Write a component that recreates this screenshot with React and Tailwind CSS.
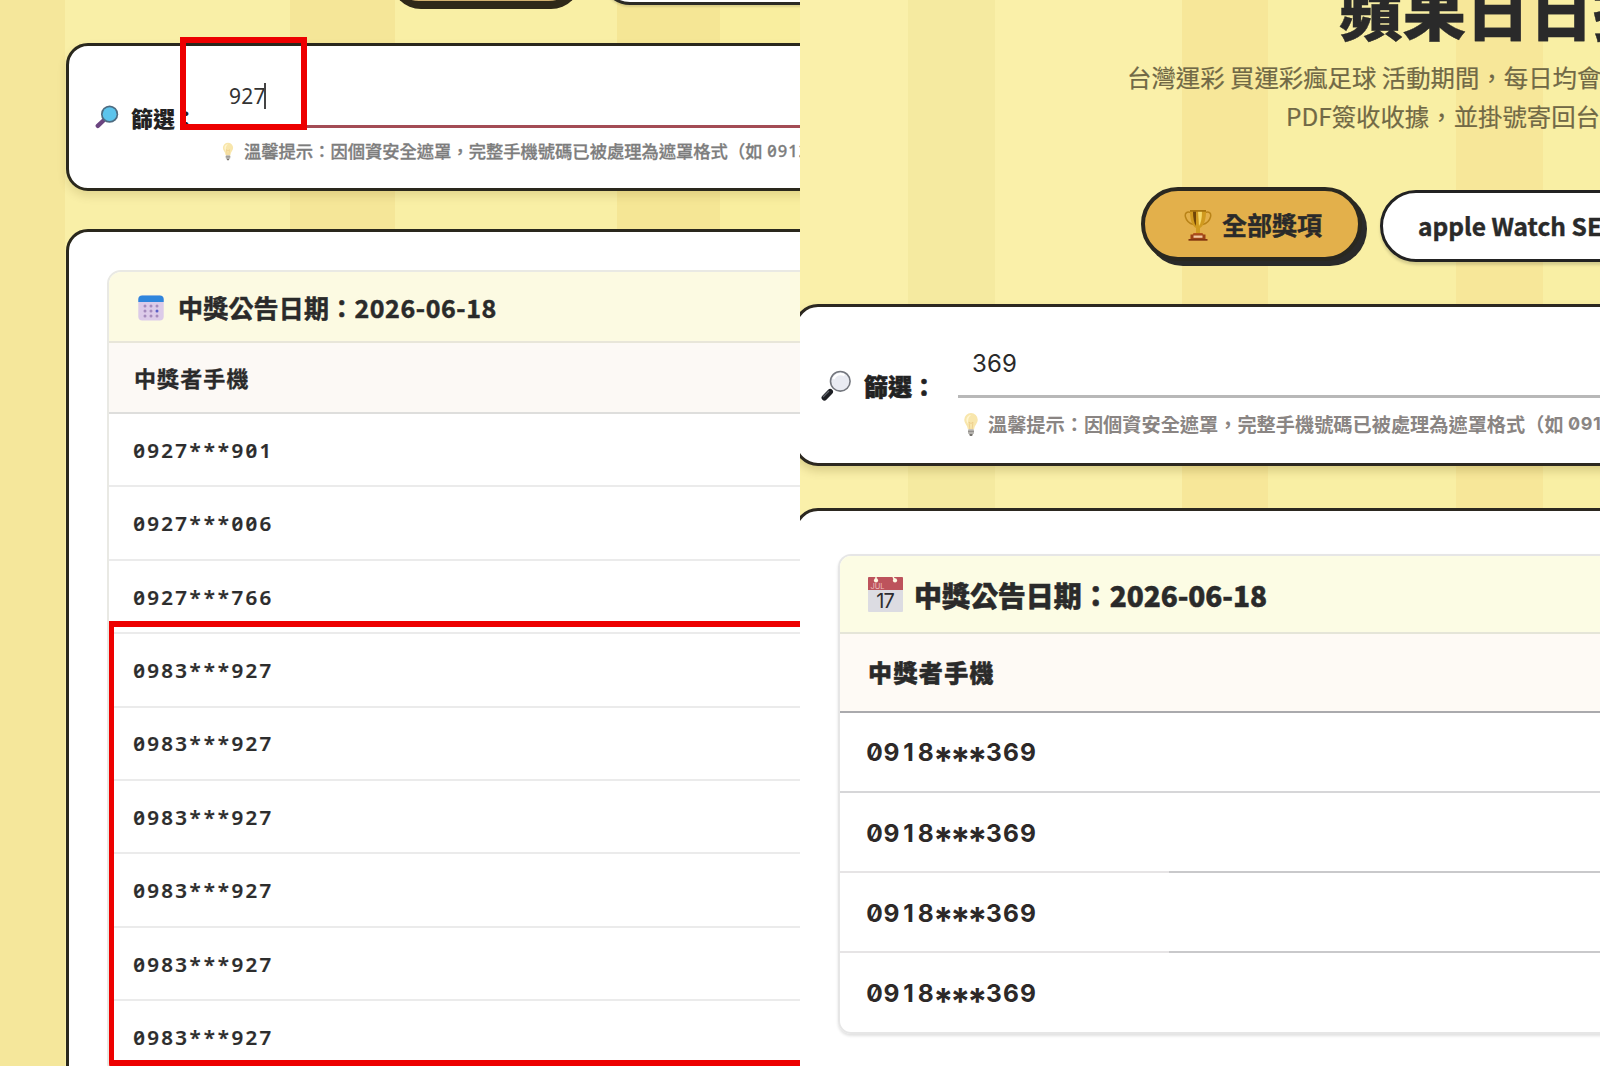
import React from 'react';

const leftPhones = [
  '0927***901',
  '0927***006',
  '0927***766',
  '0983***927',
  '0983***927',
  '0983***927',
  '0983***927',
  '0983***927',
  '0983***927',
];

const rightPhones = ['0918***369', '0918***369', '0918***369', '0918***369'];

const BlueSearchIcon = () => (
  <svg viewBox="0 0 24 24" className="w-6 h-6 shrink-0">
    <path d="M8.5 15.5 2.8 20.8" stroke="#6b4580" strokeWidth="4.4" strokeLinecap="round" />
    <circle cx="14.6" cy="9.2" r="8.6" fill="#4e6b80" />
    <circle cx="14.6" cy="9.2" r="6.9" fill="#5cc4ec" />
  </svg>
);

const GlassSearchIcon = () => (
  <svg viewBox="0 0 32 32" className="w-8 h-8 shrink-0">
    <path d="m12 20-3 3" stroke="#8b8f96" strokeWidth="2.4" />
    <path d="M10.2 21.8 4.4 27.8" stroke="#1d1f24" strokeWidth="5.6" strokeLinecap="round" />
    <path d="m9 21-6 6" stroke="#62666c" strokeWidth="1.2" />
    <circle cx="20.3" cy="11.3" r="9.8" fill="#e9ebf2" stroke="#74777e" strokeWidth="1.6" />
    <path d="M13.5 9a7.4 7.4 0 0 1 11-3.6" stroke="#fff" strokeWidth="2.2" fill="none" />
  </svg>
);

const BulbIcon = ({ className }) => (
  <svg viewBox="0 0 16 26" className={className}>
    <path d="M8 1a7 7 0 0 0-7 7c0 4 3.4 5.6 3.7 10h6.6c.3-4.4 3.7-6 3.7-10a7 7 0 0 0-7-7Z" fill="#f8e6ac" />
    <path d="M8 3.2A4.9 4.9 0 0 0 3.2 8c0 2.3 1.5 3.6 2.4 5.2A9 9 0 0 1 8 3.2Z" fill="#fff6d2" />
    <path d="M6.8 18 6 10.5 8 12l2-1.5L9.2 18" stroke="#ecca85" strokeWidth=".8" fill="none" />
    <rect x="4.9" y="18" width="6.2" height="4.8" rx="1" fill="#b5b3ae" />
    <path d="M4.9 20.2h6.2" stroke="#8f8d88" />
    <path d="M6.1 22.8h3.8L9.2 25H6.8Z" fill="#77746f" />
  </svg>
);

const GridCalendarIcon = () => (
  <svg viewBox="0 0 26 26" className="w-[26px] h-[26px] shrink-0">
    <rect x=".3" y=".5" width="25.4" height="25" rx="4" fill="#dccbe9" />
    <path d="M.3 7V4.5a4 4 0 0 1 4-4h17.4a4 4 0 0 1 4 4V7Z" fill="#2f86dc" />
    {[11, 16, 21].map((y) =>
      [7, 13, 19].map((x) => (
        <circle key={`${x}-${y}`} cx={x} cy={y} r="1.5" fill={x === 19 && y === 16 ? '#5b5fc7' : '#a58bbd'} />
      ))
    )}
  </svg>
);

const JulyCalendarIcon = () => (
  <svg viewBox="0 0 35 35" className="w-[35px] h-[35px] shrink-0">
    <rect width="35" height="35" rx="1" fill="#dcdce2" />
    <path d="M0 13V1a1 1 0 0 1 1-1h33a1 1 0 0 1 1 1v12Z" fill="#bd535c" />
    <circle cx="8" cy="3.4" r="2.1" fill="#fdfce4" />
    <circle cx="27" cy="3.4" r="2.1" fill="#fdfce4" />
    <path d="M8 3V0M27 3l-2-3" stroke="#fdfce4" strokeWidth="1.4" />
    <text x="2.4" y="12" fontSize="7.5" fontWeight="400" fill="#efc0c0" stroke="none" fontFamily="Inter, sans-serif">JUL</text>
    <text x="17" y="31" fontSize="20" fontWeight="400" textAnchor="middle" letterSpacing="-1" fill="#2c2c30" fontFamily="Inter, sans-serif">17</text>
  </svg>
);

const TrophyIcon = () => (
  <svg viewBox="0 0 28 32" className="w-7 h-8 shrink-0">
    <path d="M7 3.5C2.5 2 .6 4.5 1.5 8c1 4 4 6.5 8 7.5M21 3.5c4.5-1.5 6.4 1 5.5 4.5-1 4-4 6.5-8 7.5" stroke="#b98318" strokeWidth="1.5" fill="none" />
    <path d="M6 1h16c.3 9-2 16-6 18v5h-4v-5C8 17 5.7 10 6 1Z" fill="#d09a1f" />
    <path d="M9 2c0 7 1 12 3 15V2Z" fill="#6f4508" />
    <path d="M14 2h4c0 7-1 12-3 15Z" fill="#f5d767" />
    <path d="M6 1h16v1.8H6Z" fill="#a8750f" />
    <path d="M9.5 24h9l1 2h-11Z" fill="#b5541d" />
    <path d="M6.5 25.5h15v4.5h-15Z" fill="#9c4217" />
    <path d="M9.5 26.5h9v2.3h-9Z" fill="#f2c9a0" />
    <path d="M4.5 30h19v1.7h-19Z" fill="#813510" />
  </svg>
);

// Masked digits sit in equal cells so every number lines up
const PhoneNumber = ({ value, cell, star }) => (
  <span className="flex items-center">
    {value.split('').map((char, i) => (
      <span key={i} className={char === '*' ? `${cell} ${star}` : cell}>
        {char}
      </span>
    ))}
  </span>
);

const LeftPane = () => (
  <div className="w-[800px] h-full shrink-0 overflow-hidden flex flex-col pl-[66px] bg-[linear-gradient(90deg,#f5e79b_0_65px,#f9efa7_65px_290px,#f5e698_290px_395px,#f9efa5_395px_617px,#f5e695_617px_720px,#f9ee9f_720px)]">
    {/* Prize tabs */}
    <div className="h-[43px] shrink-0 flex items-start pl-[323px] gap-[22px]">
      <div className="w-[190px] h-[60px] -mt-[56px] shrink-0 rounded-full border-[3px] border-[#2f2818] bg-[#d3b16f] shadow-[2px_5px_0_#2f2818]" />
      <div className="w-[320px] h-[58px] -mt-[53px] shrink-0 rounded-full border-[3px] border-[#2b2a25] bg-white shadow-[0_2px_2px_rgba(0,0,0,0.12)]" />
    </div>

    {/* Filter */}
    <div className="relative w-[900px] h-[148px] shrink-0 flex rounded-[22px] border-[3px] border-[#2a281d] bg-white shadow-[0_5px_10px_rgba(90,70,0,0.14)]">
      <div className="w-[149px] shrink-0 flex items-center pl-[26px] gap-[12px] text-[22px] font-black text-[#222]">
        <BlueSearchIcon />
        <span className="whitespace-nowrap">篩選：</span>
      </div>
      <div className="flex-1">
        <div className="h-[82px] border-b-[3px] border-[#a34c55] pt-[37px] pl-[11px] flex items-start">
          <span className="font-['Noto_Sans'] text-[21px] leading-[26px] tracking-[0.3px] text-[#333]">927</span>
          <span className="w-[2px] h-[26px] -ml-[2px] bg-[#444]" />
        </div>
        <div className="flex items-center pl-[3px] pt-[9px] text-[17.3px] leading-[28px] font-medium text-[#7d7d7d] [-webkit-text-stroke:0.3px_#7d7d7d] whitespace-nowrap">
          <BulbIcon className="w-[14px] h-[19px] mr-[9px] shrink-0" />
          溫馨提示：因個資安全遮罩，完整手機號碼已被處理為遮罩格式（如&nbsp;
          <span className="ml-[1px] font-['Noto_Sans'] [font-feature-settings:'zero'] text-[16.5px] tracking-[1px]">0912</span>
        </div>
      </div>
      <div className="absolute left-[111px] top-[-9px] w-[127px] h-[93px] border-[6px] border-[#ed0000]" />
    </div>

    {/* Winners */}
    <div className="mt-[38px] w-[900px] h-[900px] shrink-0 rounded-[22px] border-[3px] border-[#2a281d] bg-white pt-[38px] pl-[38px]">
      <div className="relative border-2 border-[#e9e9e4] rounded-[14px] overflow-hidden">
        <div className="h-[71px] bg-[#fcfae2] border-b-2 border-[#e8e6d9] flex items-center pl-[29px] pt-[2px] text-[25px] font-bold text-[#2a2a2a] [-webkit-text-stroke:0.5px_#2a2a2a] whitespace-nowrap">
          <GridCalendarIcon />
          <span className="ml-[14px] tracking-[0.2px]">中獎公告日期：</span>
          <span className="tracking-[0.6px]">2026-06-18</span>
        </div>
        <div className="h-[71px] bg-[#fcf9f5] border-b-2 border-[#dededc] flex items-center pl-[25px] text-[22px] tracking-[1.1px] font-bold text-[#2a2a2a] [-webkit-text-stroke:0.3px_#2a2a2a]">
          中獎者手機
        </div>
        {leftPhones.map((phone, i) => (
          <div
            key={i}
            className="h-[73.4px] border-b-2 border-[#ebebeb] flex items-center pl-[23px] pt-[1px] font-['Noto_Sans'] [font-feature-settings:'zero'] text-[20.5px] font-semibold text-[#2d2d2d] [-webkit-text-stroke:0.2px_#2d2d2d]"
          >
            <PhoneNumber value={phone} cell="w-[14.05px] text-center" star="" />
          </div>
        ))}
        <div className="absolute left-[-1px] top-[349px] w-[900px] h-[445px] border-[6px] border-[#ed0000]" />
      </div>
    </div>
  </div>
);

const RightPane = () => (
  <div className="w-[800px] h-full shrink-0 overflow-hidden flex flex-col bg-[linear-gradient(90deg,#faf0aa_0_108px,#f5eaa0_108px_195px,#faf0a9_195px_382px,#f7e799_382px_468px,#f9efa4_468px_656px,#f7e799_656px_743px,#f9efa4_743px)]">
    {/* Heading */}
    <div className="h-[187px] shrink-0 whitespace-nowrap">
      <h1 className="-mt-[25px] pl-[539px] text-[63.5px] leading-[64px] font-black text-[#2a2a2a] [-webkit-text-stroke:0.4px_#2a2a2a]">蘋果日日抽</h1>
      <p className="mt-[19px] pl-[327px] text-[24.4px] leading-[38.5px] text-[#716946] [-webkit-text-stroke:0.2px_#716946]">台灣運彩 買運彩瘋足球 活動期間，每日均會</p>
      <p className="pl-[486px] text-[24.4px] leading-[38.5px] text-[#716946] [-webkit-text-stroke:0.2px_#716946]">PDF簽收收據，並掛號寄回台</p>
    </div>

    {/* Prize tabs */}
    <div className="h-[117px] shrink-0 flex items-start pl-[341px] gap-[18px] text-[25px] font-bold text-[#2a2a2a] whitespace-nowrap">
      <button className="w-[221px] h-[74px] shrink-0 flex items-center pl-[39px] gap-[10px] pt-[1px] rounded-full border-[4px] border-[#2a2820] bg-[#e3b04b] shadow-[5px_5px_0_#2a2a2a] [-webkit-text-stroke:0.4px_#2a2a2a]">
        <TrophyIcon />
        全部獎項
      </button>
      <button className="mt-[3px] w-[400px] h-[72px] shrink-0 flex items-center pl-[35px] rounded-full border-[3px] border-[#222] bg-white shadow-[0_3px_3px_rgba(0,0,0,0.15)] text-[24.5px] [-webkit-text-stroke:0.4px_#2a2a2a]">
        apple Watch SE
      </button>
    </div>

    {/* Filter */}
    <div className="-ml-[6px] w-[900px] h-[162px] shrink-0 flex rounded-[24px] border-[3px] border-[#2c2820] bg-white shadow-[0_5px_10px_rgba(90,70,0,0.2)]">
      <div className="w-[161px] shrink-0 flex items-center pl-[23px] gap-[12px] pt-[1px] text-[24px] font-black text-[#222] [-webkit-text-stroke:0.5px_#222]">
        <GlassSearchIcon />
        <span className="whitespace-nowrap">篩選：</span>
      </div>
      <div className="flex-1">
        <div className="h-[91px] border-b-[3px] border-[#b8b8b8] pt-[41px] pl-[14px] font-['Inter'] text-[24px] tracking-[0.2px] leading-[32px] text-[#2a2a2a]">
          369
        </div>
        <div className="flex items-center pl-[5px] pt-[11px] text-[19.2px] leading-[30px] font-bold text-[#8a8583] whitespace-nowrap">
          <BulbIcon className="w-[16px] h-[25px] mr-[9px] shrink-0" />
          溫馨提示：因個資安全遮罩，完整手機號碼已被處理為遮罩格式（如&nbsp;
          <span className="font-['Inter'] [font-feature-settings:'zero'] text-[18px] tracking-[0.6px]">0912</span>
        </div>
      </div>
    </div>

    {/* Winners */}
    <div className="-ml-[6px] mt-[42px] w-[900px] h-[700px] shrink-0 rounded-[24px] border-[3px] border-[#2c2820] bg-white pt-[43px] pl-[41px]">
      <div className="border-2 border-[#e6e6e6] rounded-[13px] overflow-hidden shadow-[0_2px_3px_rgba(0,0,0,0.12)]">
        <div className="h-[78px] bg-[#fcfce4] border-b-2 border-[#e5e5d8] flex items-center pl-[28px] gap-[11px] pt-[1px] text-[28px] font-black text-[#2a2a2a]">
          <JulyCalendarIcon />
          <span className="tracking-[-0.05px] [-webkit-text-stroke:0.5px_#2a2a2a]">中獎公告日期：2026-06-18</span>
        </div>
        <div className="h-[78.5px] bg-[#fefaf5] border-b-2 border-[#aaaaad] flex items-center pl-[28px] text-[24px] tracking-[1.4px] font-black text-[#2a2a2a] [-webkit-text-stroke:0.5px_#2a2a2a]">
          中獎者手機
        </div>
        {rightPhones.map((phone, i) => (
          <div
            key={i}
            className={`${i < 3 ? 'h-[80.3px]' : 'h-[78.5px]'} flex flex-col font-['Inter'] [font-feature-settings:'zero'] text-[24.5px] font-bold text-[#2d2928]`}
          >
            <div className="flex-1 flex items-center pl-[26px] pt-[2px]">
              <PhoneNumber value={phone} cell="w-[17.05px] text-center" star="relative top-[7px] text-[36px] leading-[30px] -indent-[1px]" />
            </div>
            {i < 3 && (
              <div className="h-[2px] shrink-0 flex">
                <div className={i === 0 ? 'w-[329px] bg-[#d6d6d8]' : 'w-[329px] bg-[#e6e4e5]'} />
                <div className={i === 0 ? 'flex-1 bg-[#d6d6d8]' : 'flex-1 bg-[#c9c9cb]'} />
              </div>
            )}
          </div>
        ))}
      </div>
    </div>
  </div>
);

const App = () => {
  return (
    <div className="w-[1600px] h-[1066px] flex overflow-hidden font-['Noto_Sans_CJK_TC',sans-serif]">
      <LeftPane />
      <RightPane />
    </div>
  );
};

export default App;
